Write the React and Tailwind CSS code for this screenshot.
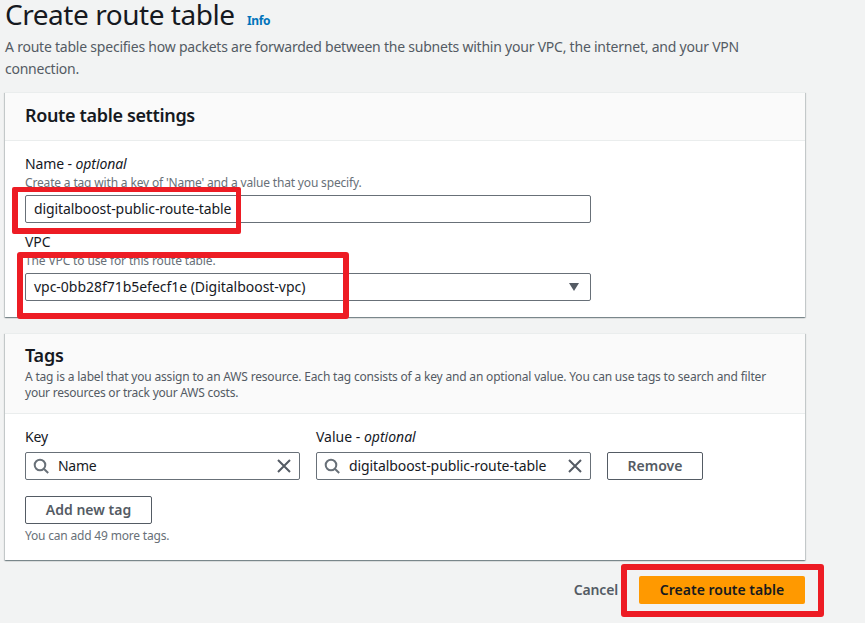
function Card({ header, children, className }) {
  return (
    <section
      className={`border-t border-[#eaeded] bg-white shadow-[0_1px_1px_0_rgba(0,28,36,0.3),1px_1px_1px_0_rgba(0,28,36,0.15),-1px_1px_1px_0_rgba(0,28,36,0.15)] ${className}`}
    >
      <header className="border-b border-[#eaeded] bg-[#fafafa] px-5">{header}</header>
      <div className="px-5">{children}</div>
    </section>
  );
}

function SearchIcon() {
  return (
    <svg className="size-4 shrink-0" viewBox="0 0 16 16" fill="none" stroke="#687078" strokeWidth="2">
      <circle cx="7" cy="7" r="5.3" />
      <path d="m10.8 10.8 4.4 4.2" />
    </svg>
  );
}

function CloseIcon() {
  return (
    <svg className="size-4 shrink-0" viewBox="0 0 16 16" fill="none" stroke="#545b64" strokeWidth="2">
      <path d="m2 2 12 12M14 2 2 14" />
    </svg>
  );
}

function SearchField({ value, tracking }) {
  return (
    <div className="flex h-7 w-[275px] items-center rounded-[2px] border border-[#687078] bg-white px-[7px] leading-[22px]">
      <SearchIcon />
      <span className={`ml-[9px] flex-1 whitespace-nowrap ${tracking}`}>{value}</span>
      <CloseIcon />
    </div>
  );
}

export default function App() {
  return (
    <div className="h-[623px] w-[865px] bg-[#f2f3f3] pl-[5px] font-['Noto_Sans','Open_Sans',sans-serif] text-[14px] leading-[22px] text-[#16191f]">
      <div className="w-[800px]">
        <div className="flex h-9 items-baseline whitespace-nowrap">
          <h1 className="w-[242px] text-[28px] leading-[29px] tracking-[-0.46px]">Create route table</h1>
          <a className="text-[12px] leading-4 font-bold tracking-[-0.4px] text-[#0073bb]">Info</a>
        </div>
        <p className="h-14 tracking-[-0.223px] whitespace-nowrap text-[#545b64]">
          A route table specifies how packets are forwarded between the subnets within your VPC, the internet, and your VPN
          <br />
          <span className="tracking-[-0.25px]">connection.</span>
        </p>

        <Card
          className="h-[225px]"
          header={
            <h2 className="h-[47px] pt-[11px] text-[18px] font-semibold tracking-[-0.35px]">Route table settings</h2>
          }
        >
          <div className="pt-3">
            <div className="tracking-[-0.1px]">
              Name - <em>optional</em>
            </div>
            <div className="h-5 text-[12px] leading-4 tracking-[-0.165px] text-[#687078]">
              Create a tag with a key of 'Name' and a value that you specify.
            </div>
            <div className="h-7 w-[566px] rounded-[2px] border border-[#687078] px-2 leading-[26px] tracking-[-0.09px]">
              digitalboost-public-route-table
            </div>
            <div className="pt-2 tracking-[-0.1px]">VPC</div>
            <div className="h-5 text-[12px] leading-4 tracking-[-0.13px] text-[#687078]">
              The VPC to use for this route table.
            </div>
            <div className="flex h-7 w-[566px] items-center justify-between rounded-[2px] border border-[#687078] pr-[11px] pl-2 tracking-[-0.03px]">
              vpc-0bb28f71b5efecf1e (Digitalboost-vpc)
              <svg className="h-2 w-[10px]" viewBox="0 0 10 8">
                <path d="M0 0h10L5 8z" fill="#545b64" />
              </svg>
            </div>
          </div>
        </Card>

        <Card
          className="mt-4 h-[227px]"
          header={
            <div className="h-[79px] pt-[10px]">
              <h2 className="text-[18px] leading-[22px] font-semibold tracking-[-0.2px]">Tags</h2>
              <p className="mt-[3px] text-[12px] leading-4 tracking-[-0.182px] whitespace-nowrap text-[#545b64]">
                A tag is a label that you assign to an AWS resource. Each tag consists of a key and an optional value. You can use tags to
                search and filter
                <br />
                <span className="tracking-[-0.235px]">your resources or track your AWS costs.</span>
              </p>
            </div>
          }
        >
          <div className="flex items-end gap-4 pt-3">
            <div>
              <div className="mb-1 tracking-[-0.2px]">Key</div>
              <SearchField value="Name" tracking="tracking-[-0.3px]" />
            </div>
            <div>
              <div className="mb-1">
                Value - <em>optional</em>
              </div>
              <SearchField value="digitalboost-public-route-table" tracking="tracking-[-0.09px]" />
            </div>
            <button className="h-7 w-24 rounded-[2px] border border-[#545b64] font-semibold text-[#545b64]">Remove</button>
          </div>
          <button className="mt-4 h-7 w-[127px] rounded-[2px] border border-[#545b64] font-semibold text-[#545b64]">
            Add new tag
          </button>
          <div className="mt-1 text-[12px] leading-4 tracking-[-0.19px] text-[#687078]">You can add 49 more tags.</div>
        </Card>

        <div className="mt-4 flex items-center justify-end">
          <button className="mr-[21px] font-semibold tracking-[-0.15px] text-[#545b64]">Cancel</button>
          <button className="h-7 w-[166px] rounded-[2px] bg-[#ff9900] font-semibold">Create route table</button>
        </div>
      </div>

      <div className="absolute top-[187px] left-[12px] h-[47px] w-[229px] rounded-[2px] border-[5px] border-l-[6px] border-b-[6px] border-[#ed1c24]" />
      <div className="absolute top-[252px] left-[17px] h-[67px] w-[332px] rounded-[3px] border-[6px] border-[#ed1c24]" />
      <div className="absolute top-[564px] left-[621px] h-[53px] w-[203px] rounded-[3px] border-[6px] border-[#ed1c24]" />
    </div>
  );
}
